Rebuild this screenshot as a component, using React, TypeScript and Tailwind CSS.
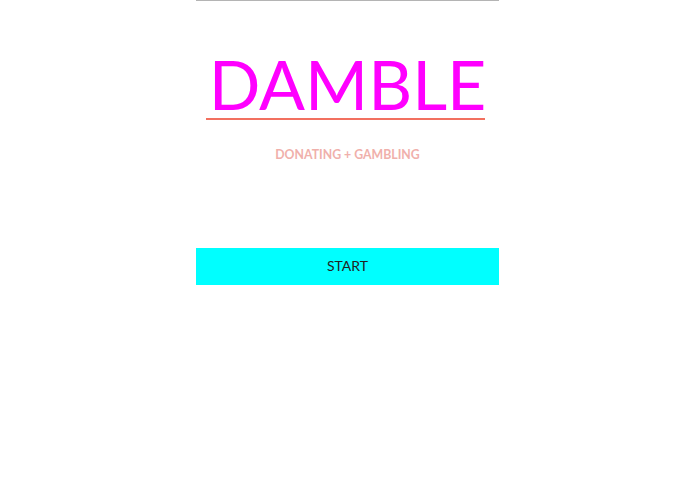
import React from 'react';

const App: React.FC = () => {
  return (
    <div className="min-h-screen w-full bg-white font-['Lato',sans-serif]">
      <div className="mx-auto flex w-[303px] flex-col items-center border-t border-[#b4b4b4]">
        <div className="mt-[49px] flex w-full flex-col items-center">
          <h1 className="text-[68px] leading-[68px] font-normal text-[#ff00ff]">DAMBLE</h1>
          <div className="ml-[10px] h-[2px] w-[279px] self-start bg-[#f2705f]" />
        </div>
        <p className="mt-[25px] text-[12.3px] font-bold leading-[20px] text-[#f0b0ab]">DONATING + GAMBLING</p>
        <button className="mt-[83px] flex h-[37px] w-full items-center justify-center bg-[#00ffff] pb-[2px] text-[14px] text-[#222222]">
          START
        </button>
      </div>
    </div>
  );
};

export default App;
